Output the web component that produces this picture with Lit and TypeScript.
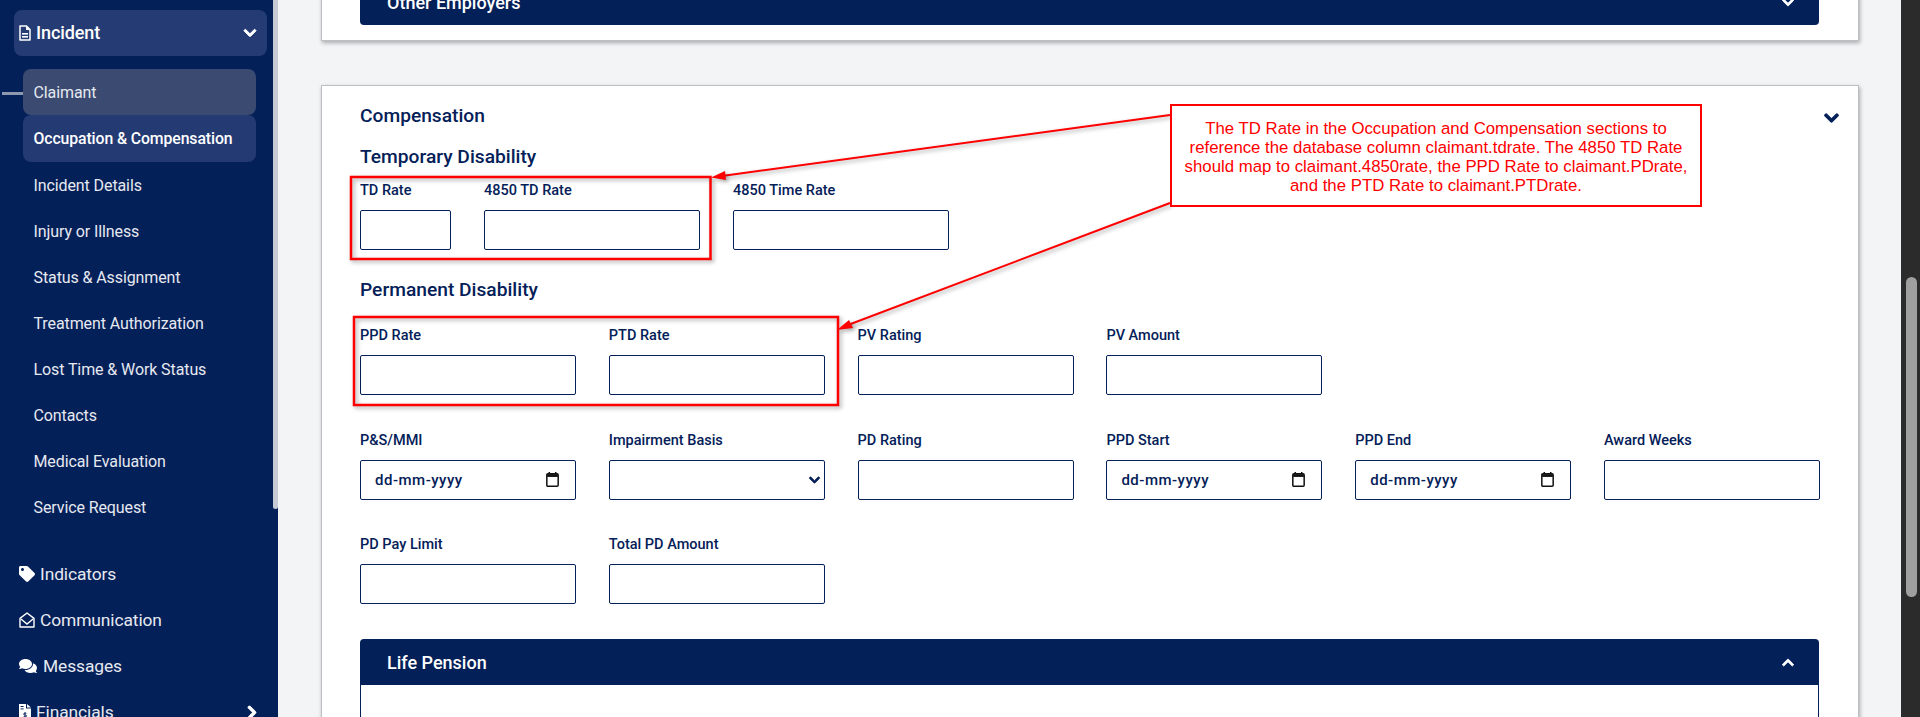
import { LitElement, html, css, svg } from "lit";
import { customElement } from "lit/decorators.js";

const chevDown = "M207.029 381.476L12.686 187.132c-9.373-9.373-9.373-24.569 0-33.941l22.667-22.667c9.357-9.357 24.522-9.375 33.901-.04L224 284.505l154.745-154.021c9.379-9.335 24.544-9.317 33.901.04l22.667 22.667c9.373 9.373 9.373 24.569 0 33.941L240.971 381.476c-9.373 9.372-24.569 9.372-33.942 0z";
const chevUp = "M240.971 130.524l194.343 194.343c9.373 9.373 9.373 24.569 0 33.941l-22.667 22.667c-9.357 9.357-24.522 9.375-33.901.04L224 227.495 69.255 381.516c-9.379 9.335-24.544 9.317-33.901-.04l-22.667-22.667c-9.373-9.373-9.373-24.569 0-33.941L207.03 130.525c9.372-9.373 24.568-9.373 33.941-.001z";
const chevRight = "M285.476 272.971L91.132 467.314c-9.373 9.373-24.569 9.373-33.941 0l-22.667-22.667c-9.357-9.357-9.375-24.522-.04-33.901L188.505 256 34.484 101.255c-9.335-9.379-9.317-24.544.04-33.901l22.667-22.667c9.373-9.373 24.569-9.373 33.941 0L285.475 239.03c9.373 9.372 9.373 24.568.001 33.941z";
const tag = "M0 252.118V48C0 21.49 21.49 0 48 0h204.118a48 48 0 0 1 33.941 14.059l211.882 211.882c18.745 18.745 18.745 49.137 0 67.882L293.823 497.941c-18.745 18.745-49.137 18.745-67.882 0L14.059 286.059A48 48 0 0 1 0 252.118zM112 64c-26.51 0-48 21.49-48 48s21.49 48 48 48 48-21.49 48-48-21.49-48-48-48z";
const comments = "M416 192c0-88.4-93.1-160-208-160S0 103.6 0 192c0 34.3 14.1 65.9 38 92-13.4 30.2-35.5 54.2-35.8 54.5-2.2 2.3-2.8 5.7-1.5 8.7S4.8 352 8 352c36.6 0 66.9-12.3 88.7-25 32.2 15.7 70.3 25 111.3 25 114.9 0 208-71.6 208-160zm122 220c23.9-26 38-57.7 38-92 0-66.9-53.5-124.2-129.3-148.1.9 6.6 1.3 13.3 1.3 20.1 0 105.9-107.7 192-240 192-10.8 0-21.3-.8-31.7-1.9C207.8 439.6 281.8 480 368 480c41 0 79.1-9.2 111.3-25 21.8 12.7 52.1 25 88.7 25 3.2 0 6.1-1.9 7.3-4.8 1.3-2.9.7-6.3-1.5-8.7-.3-.3-22.4-24.2-35.8-54.5z";

const icon = (d: string, vb: string, cls: string) =>
  html`<svg class=${cls} viewBox=${vb} aria-hidden="true"><path d=${d} fill="currentColor" stroke="currentColor" stroke-width="36"></path></svg>`;
const solid = (d: string, vb: string, cls: string) =>
  html`<svg class=${cls} viewBox=${vb} aria-hidden="true"><path d=${d} fill="currentColor"></path></svg>`;

const fileIcon = html`<svg class="ico file" viewBox="0 0 12 16" aria-hidden="true">
  <path d="M1 1h6.5L11 4.5V15H1z" fill="none" stroke="currentColor" stroke-width="1.5" stroke-linejoin="round"></path>
  <path d="M7 1v4h4" fill="currentColor"></path>
  <rect x="3" y="8" width="6" height="1.6" fill="currentColor"></rect>
  <rect x="3" y="11" width="6" height="1.6" fill="currentColor"></rect>
</svg>`;
const envelopeIcon = html`<svg class="ico env" viewBox="0 0 16 16" aria-hidden="true">
  <path d="M1 6.4L8 1l7 5.4V15H1z" fill="none" stroke="currentColor" stroke-width="1.4" stroke-linejoin="round"></path>
  <path d="M2 7l6 5 6-5" fill="none" stroke="currentColor" stroke-width="1.4"></path>
</svg>`;
const invoiceIcon = html`<svg class="ico file" viewBox="0 0 12 16" aria-hidden="true">
  <path d="M0 0h7v4.5h5V16H0zM8 0l4 3.5H8z" fill="currentColor"></path>
  <rect x="1.6" y="2" width="3" height="1" fill="#042058"></rect>
  <rect x="1.6" y="4.4" width="3" height="1" fill="#042058"></rect>
  <path d="M7.4 9.2H5.6a.8.8 0 000 1.8h1a.8.8 0 010 1.8H4.6M6 8.2v5.6" fill="none" stroke="#042058" stroke-width=".9"></path>
</svg>`;
const calIcon = html`<svg class="cal" viewBox="0 0 12 14" aria-hidden="true">
  <path d="M3 0v2M9 0v2" stroke="#111" stroke-width="1.4"></path>
  <rect x=".7" y="1.7" width="10.6" height="11.6" rx="1" fill="#fff" stroke="#111" stroke-width="1.4"></rect>
  <rect x="1" y="2" width="10" height="2.6" fill="#111"></rect>
</svg>`;

const subs = [
  "Claimant", "Occupation & Compensation", "Incident Details", "Injury or Illness",
  "Status & Assignment", "Treatment Authorization", "Lost Time & Work Status",
  "Contacts", "Medical Evaluation", "Service Request",
];

@customElement("app-root")
export class AppRoot extends LitElement {
  static styles = css`
    :host {
      display: grid;
      grid-template-columns: 273px 5px 1fr 19px;
      width: 1920px;
      height: 717px;
      overflow: hidden;
      position: relative;
      background: #f3f4f6;
      font-family: Roboto, "Liberation Sans", sans-serif;
      color: #042058;
    }
    .side { background: #042058; color: #e6e9f1; overflow: hidden; padding-top: 10px; position: relative; }
    .side-track { background: #042058; }
    .side-thumb { height: 509px; background: #c6cad4; border-radius: 0 0 3px 3px; }
    .top-item {
      display: flex; align-items: center; height: 46px; margin: 0 6px 0 14px; padding: 0 10px 0 5px;
      border-radius: 8px; font-size: 17.4px; color: #fff; gap: 5px; letter-spacing: -.1px;
    }
    .top-item.open { background: #243b74; margin-bottom: 13px; }
    .top-item span { flex: 1; }
    .top-item .tall { font-weight: 500; font-size: 18px; padding-bottom: 2px; }
    .subs { margin: 0 17px 0 23px; display: flex; flex-direction: column; }
    .sub {
      height: 46px; box-sizing: border-box; display: flex; align-items: center; padding: 1px 0 0 10.5px; border-radius: 8px;
      font-size: 16px; color: #e6e9f1; letter-spacing: -.1px; position: relative;
    }
    .sub.hover { background: #3a4a70; padding-top: 0; }
    .sub.active { background: #243a73; color: #fff; font-weight: 500; font-size: 15.8px; height: 47px; padding-top: 0; }
    .sub.hover::before {
      content: ""; position: absolute; left: -21px; top: 23px; width: 21px; height: 2.5px; background: #8d97ad;
    }
    .tops { margin-top: 21px; display: flex; flex-direction: column; }
    .tops .top-item { color: #e6e9f1; font-weight: 400; }
    .ico { flex: none; color: #fff; display: block; }
    .ico.file { width: 12px; height: 16px; }
    .ico.tagi { width: 16px; height: 16px; }
    .ico.env { width: 16px; height: 16px; }
    .ico.com { width: 18px; height: 16px; margin-right: 1px; }
    .ico.chev { width: 14px; height: 14px; }
    .ico.chevr { width: 10px; height: 15px; }

    .main { overflow: hidden; padding: 0 42px 0 43px; }
    .card {
      background: #fff; border: 1px solid #bdbfc2; box-shadow: 1px 2px 4px rgba(0,0,0,.3);
      padding: 0 39px 0 38px;
    }
    .card.first { margin-top: -40px; padding-top: 18px; padding-bottom: 15px; margin-bottom: 44px; }
    .bar {
      background: #042058; color: #fff; display: flex; align-items: center; justify-content: space-between;
      padding: 0 26px 0 27px; font-size: 18px; font-weight: 500; height: 46px;
      border-radius: 4px;
    }
    .bar.closed { border-radius: 4px; }
    .bar.opened { border-radius: 4px 4px 0 0; }
    .bar svg { width: 12px; height: 13px; color: #fff; display: block; margin-right: -1px; }
    .pension { margin-top: 35px; }
    .pension-body { border: 1px solid #042058; border-top: 0; height: 60px; }
    .card.second { padding-top: 17px; height: 700px; }
    .sec-head { display: flex; justify-content: space-between; align-items: center; }
    h2 { margin: 0; font-size: 19.2px; line-height: 24px; font-weight: 500; color: #042058; padding-top: 1px; }
    .sub-h { margin-top: 16px; }
    .sub-h.perm { margin-top: 27px; }
    .sec-head svg { width: 15px; height: 16px; color: #042058; display: block; margin: 4px -20px 0 0; }
    .grid { display: grid; grid-template-columns: repeat(6, 216px); column-gap: 32.8px; margin-top: 34.5px; }
    .grid.temp { grid-template-columns: 91px 216px 216px; column-gap: 33px; margin-top: 11px; }
    .grid.perm { margin-top: 23px; }
    .field label { display: block; font-size: 14.5px; font-weight: 500; line-height: 20px; padding-top: 1px; margin-bottom: 9px; color: #042058; }
    .inp {
      box-sizing: border-box; display: flex; align-items: center; justify-content: space-between;
      width: 100%; height: 40px; background: #fff; border: 1px solid #042058; border-radius: 2px;
      padding: 0 16px 0 14px; font: 500 15px Roboto, sans-serif; color: #042058; letter-spacing: .5px; outline: none;
    }
    .cal { width: 13px; height: 15px; display: block; }
    .inp.sel { padding-right: 4px; }
    .sel svg { width: 11px; height: 12px; color: #042058; display: block; }

    .sb { background: #2b2b2b; display: flex; flex-direction: column; align-items: center; }
    .sb div { width: 11px; height: 320px; margin-top: 277px; background: #9f9f9f; border-radius: 6px; margin-left: 1px; }

    .anno { position: absolute; inset: 0; width: 1920px; height: 717px; pointer-events: none; }
    .anno * { filter: drop-shadow(2px 2px 2px rgba(0,0,0,.35)); }
    .callout {
      position: absolute; left: 1170px; top: 104px; width: 532px; height: 103px; box-sizing: border-box;
      border: 2px solid #f00; background: #fff; color: #f00; padding-top: 13px;
      font: 16.8px/19px "Liberation Sans", Arial, sans-serif; text-align: center; white-space: nowrap;
    }
  `;

  field(label: string, kind: string = "text") {
    return html`<div class="field">
      <label>${label}</label>
      ${kind === "date"
        ? html`<div class="inp"><span>dd-mm-yyyy</span>${calIcon}</div>`
        : kind === "select"
          ? html`<div class="inp sel"><span></span>${icon(chevDown, "0 0 448 512", "")}</div>`
          : html`<input class="inp" type="text" aria-label=${label} />`}
    </div>`;
  }

  render() {
    return html`
      <nav class="side">
        <div class="top-item open">${fileIcon}<span class="tall">Incident</span>${icon(chevDown, "0 0 448 512", "ico chev")}</div>
        <div class="subs">
          ${subs.map((s, i) => html`<div class="sub ${i === 0 ? "hover" : i === 1 ? "active" : ""}">${s}</div>`)}
        </div>
        <div class="tops">
          <div class="top-item">${solid(tag, "0 0 512 512", "ico tagi")}<span>Indicators</span></div>
          <div class="top-item">${envelopeIcon}<span>Communication</span></div>
          <div class="top-item">${solid(comments, "0 0 576 512", "ico com")}<span>Messages</span></div>
          <div class="top-item">${invoiceIcon}<span>Financials</span>${icon(chevRight, "0 0 320 512", "ico chevr")}</div>
        </div>
      </nav>
      <div class="side-track"><div class="side-thumb"></div></div>
      <main class="main">
        <section class="card first">
          <div class="bar closed"><span>Other Employers</span>${icon(chevDown, "0 0 448 512", "")}</div>
        </section>
        <section class="card second">
          <div class="sec-head"><h2>Compensation</h2>${icon(chevDown, "0 0 448 512", "")}</div>
          <h2 class="sub-h">Temporary Disability</h2>
          <div class="grid temp">
            ${this.field("TD Rate")}${this.field("4850 TD Rate")}${this.field("4850 Time Rate")}
          </div>
          <h2 class="sub-h perm">Permanent Disability</h2>
          <div class="grid perm">
            ${this.field("PPD Rate")}${this.field("PTD Rate")}${this.field("PV Rating")}${this.field("PV Amount")}
          </div>
          <div class="grid">
            ${this.field("P&S/MMI", "date")}${this.field("Impairment Basis", "select")}${this.field("PD Rating")}
            ${this.field("PPD Start", "date")}${this.field("PPD End", "date")}${this.field("Award Weeks")}
          </div>
          <div class="grid">
            ${this.field("PD Pay Limit")}${this.field("Total PD Amount")}
          </div>
          <div class="pension">
            <div class="bar opened"><span>Life Pension</span>${icon(chevUp, "0 0 448 512", "")}</div>
            <div class="pension-body"></div>
          </div>
        </section>
      </main>
      <div class="sb"><div></div></div>

      <svg class="anno" viewBox="0 0 1920 717" aria-hidden="true">
        ${svg`
          <rect x="351" y="177" width="359.5" height="82" fill="none" stroke="#f00" stroke-width="2.5"></rect>
          <rect x="354" y="317" width="484" height="88" fill="none" stroke="#f00" stroke-width="2.5"></rect>
          <path d="M1170 115L722 176" stroke="#f00" stroke-width="2" fill="none"></path>
          <path d="M711 177.5L725 171L726 180z" fill="#f00"></path>
          <path d="M1170 203L848 325" stroke="#f00" stroke-width="2" fill="none"></path>
          <path d="M837 330L849 320L853 328z" fill="#f00"></path>
        `}
      </svg>
      <div class="callout">The TD Rate in the Occupation and Compensation sections to<br />reference the database column claimant.tdrate. The 4850 TD Rate<br />should map to claimant.4850rate, the PPD Rate to claimant.PDrate,<br />and the PTD Rate to claimant.PTDrate.</div>
    `;
  }
}
